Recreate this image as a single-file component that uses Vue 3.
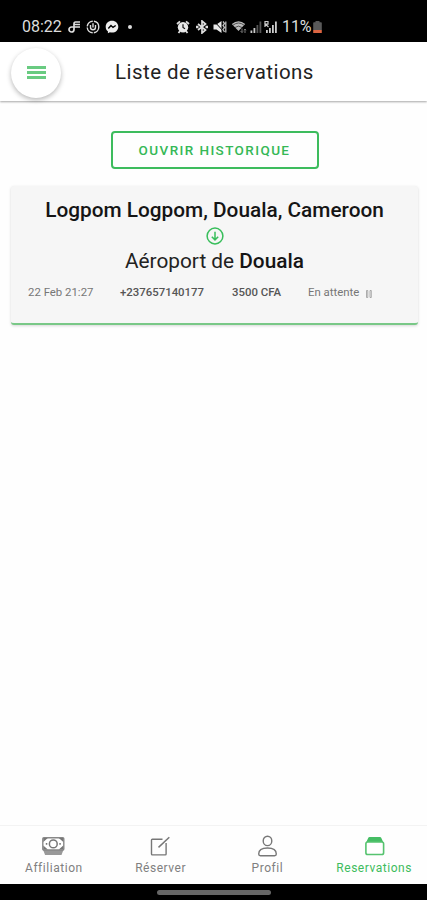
<script setup>
import { ref } from 'vue'

const active = ref('reservations')

const tabs = [
  { id: 'affiliation', label: 'Affiliation' },
  { id: 'reserver', label: 'Réserver' },
  { id: 'profil', label: 'Profil' },
  { id: 'reservations', label: 'Reservations' }
]
</script>

<template>
  <div class="screen">
    <div class="status-bar">
      <span class="time">08:22</span>
      <svg class="i-note" width="14" height="14" viewBox="0 0 14 14" fill="none" stroke="#ddd" stroke-width="1.7">
        <path d="M13 2H8.5Q7 2 7 4v5.5a2.5 2.5 0 1 1-2.5-2.5H13M7 4.5h6" />
      </svg>
      <svg class="i-round" width="14" height="14" viewBox="0 0 14 14" fill="none" stroke="#ddd" stroke-width="1.4">
        <circle cx="7" cy="7" r="5.8" stroke-dasharray="8 1.2" />
        <path d="M4.5 5v2.2a2.5 2.5 0 0 0 5 0V5M7 3.3v4.2" />
      </svg>
      <svg class="i-msg" width="14" height="14" viewBox="0 0 14 14">
        <path d="M7 .7C3.3.7.7 3.3.7 6.7c0 2 .8 3.5 2.2 4.6v2l2-1c.7.2 1.4.3 2.1.3 3.7 0 6.3-2.6 6.3-5.9S10.7.7 7 .7z" fill="#eee" />
        <path d="M3.3 8.5L6 5.6l2 1.8 2.7-1.9" fill="none" stroke="#000" stroke-width="1.4" />
      </svg>
      <span class="dot"></span>
      <svg class="i-alarm" width="14" height="14" viewBox="0 0 14 14" fill="none">
        <path d="M1 4l3-2.7M13 4l-3-2.7M2.5 13l1.500-2M11.500 13L10 11" stroke="#ddd" stroke-width="1.8" />
        <circle cx="7" cy="7.200" r="5.200" fill="#e8e8e8" />
        <path d="M7 4.300v3.200l2 1.300" stroke="#111" stroke-width="1.2" />
      </svg>
      <svg class="i-bt" width="14" height="14" viewBox="0 0 14 14" fill="none" stroke="#ddd" stroke-width="1.7">
        <path d="M3 4l7.500 6L7 13V1l3.500 3L3 10" />
        <path d="M1 7h2.500M10.500 7H13" stroke-width="2.400" />
      </svg>
      <svg class="i-mute" width="14" height="14" viewBox="0 0 14 14">
        <path d="M.5 4.500h3L8.500 1v12l-5-3.500h-3z" fill="#e8e8e8" />
        <path d="M1 1l11 12" stroke="#000" stroke-width="1" />
        <path d="M10 1.500l1.500 2-1.500 2 1.500 2-1.500 2 1.500 2.500M12.800 1.500v11" fill="none" stroke="#bbb" stroke-width="1.3" />
      </svg>
      <svg class="i-wifi" width="16" height="14" viewBox="0 0 16 14" fill="none">
        <path d="M.8 4Q7.500-1.500 14.200 4L7.500 11z" fill="#bbb" />
        <path d="M2 5.200q5.500-4.400 11 0M4 7.500q3.500-2.800 7 0" stroke="#333" stroke-width=".8" />
        <path d="M11 8.500v4m-1.500-1.500l1.500 1.500 1-1M14 13V9m-1.200 1.200L14 9l1.200 1.200" stroke="#777" />
      </svg>
      <svg class="i-sig" width="12" height="14" viewBox="0 0 12 14">
        <path d="M.5 10.500h1.800V13H.5zM3.500 8h1.800v5H3.500z" fill="#ccc" />
        <path d="M6.500 5h1.800v8H6.500zM9.500 1.500h1.800V13H9.500z" fill="#555" />
      </svg>
      <svg class="i-sig2" width="13" height="14" viewBox="0 0 13 14">
        <path d="M2 10h1.800v3H2zM5 8h1.800v5H5zM8 5h1.800v8H8zM11 1.500h1.800V13H11z" fill="#ccc" />
        <path d="M1 7V1.500h3v2.700H1.500L4.500 7" fill="none" stroke="#ccc" stroke-width="1.2" />
      </svg>
      <span class="percent">11%</span>
      <svg class="i-bat" width="9" height="14" viewBox="0 0 9 14">
        <path d="M2.500 1h4v1.200H8q.8 0 .8.800v7H.2V3q0-.8.800-.8h1.500z" fill="#595959" />
        <path d="M.2 10h8.600v3H.2z" fill="#dc6542" />
      </svg>
    </div>

    <header class="toolbar">
      <button type="button" class="menu-btn">
        <span></span><span></span><span></span>
      </button>
      <h1>Liste de réservations</h1>
    </header>

    <main class="content">
      <button type="button" class="history-btn">OUVRIR HISTORIQUE</button>

      <div class="card">
        <div class="place from">Logpom Logpom, Douala, Cameroon</div>
        <svg class="arrow" width="18" height="18" viewBox="0 0 18 18" fill="none" stroke="#38be5b" stroke-width="1.5">
          <circle cx="9" cy="9" r="7.9" />
          <path d="M9 4.800v8M5.800 9.700L9 12.900l3.200-3.200" />
        </svg>
        <div class="place to">Aéroport de <b>Douala</b></div>
        <div class="infos">
          <span class="date">22 Feb 21:27</span>
          <span class="phone">+237657140177</span>
          <span class="price">3500 CFA</span>
          <span class="state">En attente</span>
          <svg class="pause" width="6" height="8" viewBox="0 0 6 8" fill="none" stroke="#999" stroke-width=".8">
            <path d="M.5.500h1.300v7H.5zM4 .5h1.300v7H4z" />
          </svg>
        </div>
      </div>
    </main>

    <nav class="tabs">
      <button
        v-for="tab in tabs"
        :key="tab.id"
        type="button"
        :class="[tab.id, { active: active === tab.id }]"
        @click="active = tab.id"
      >
        <svg v-if="tab.id === 'affiliation'" width="24" height="24" viewBox="0 0 24 24">
          <path d="M1.800 15h21l-2.300 5.900H4.100z" fill="#999" />
          <rect x="1.800" y="3.700" width="21" height="12.300" rx="1" fill="#fff" stroke="#888" stroke-width="1.400" />
          <path d="M2.300 4h4.500l-4.500 4zM22.300 4h-4.500l4.500 4zM2.300 15.500h4.500l-4.500-4zM22.300 15.500h-4.500l4.500-4z" fill="#777" />
          <circle cx="12.300" cy="9.900" r="3.900" fill="none" stroke="#777" stroke-width="1.500" />
          <path d="M4.800 9.900h1.500M18.300 9.900h1.500" stroke="#777" stroke-width="1.700" />
        </svg>
        <svg v-else-if="tab.id === 'reserver'" width="24" height="24" viewBox="0 0 24 24" fill="none" stroke="#777" stroke-width="1.4">
          <path d="M14.500 5.300H4.300q-.8 0-.8.800v14q0 .8.800.8h13q.8 0 .8-.8V9" />
          <path d="M10.500 13.400L21.300 3.200" stroke-width="1.5" />
        </svg>
        <svg v-else-if="tab.id === 'profil'" width="24" height="24" viewBox="0 0 24 24" fill="none" stroke="#777" stroke-width="1.4">
          <ellipse cx="12.500" cy="6.900" rx="4.300" ry="4.700" />
          <path d="M3.700 20c0-4 3.600-6 8.800-6s8.800 2 8.800 6q0 1.700-1.700 1.700H5.400q-1.700 0-1.700-1.700z" />
        </svg>
        <svg v-else width="24" height="24" viewBox="0 0 24 24">
          <path d="M7.500 3h10.500q.8 0 1.200.8l2.300 5h-17.500l2.300-5q.4-.8 1.200-.8z" fill="#45bd64" />
          <rect x="3.900" y="8" width="17.700" height="12.500" rx="1.800" fill="#fff" stroke="#56c36f" stroke-width="1.6" />
        </svg>
        <span>{{ tab.label }}</span>
      </button>
    </nav>
    <div class="system-bar"><span></span></div>
  </div>
</template>

<style>
body {
  margin: 0;
}
</style>

<style scoped>
.screen {
  display: flex;
  flex-direction: column;
  width: 427px;
  height: 900px;
  overflow: hidden;
  background: #fefefe;
  font-family: Roboto, "Liberation Sans", sans-serif;
  color: #222;
}

button {
  padding: 0;
  border: none;
  background: transparent;
  font-family: inherit;
}

svg {
  display: block;
  flex: none;
}

.status-bar {
  display: flex;
  flex: none;
  align-items: center;
  box-sizing: border-box;
  height: 42px;
  padding: 11px 0 0 22px;
  background: #000;
  color: #ddd;
  font-size: 16px;
  line-height: 20px;
  white-space: nowrap;
}

.time {
  width: 45px;
}

.i-round,
.i-msg,
.i-bt {
  margin-left: 5px;
}

.dot {
  width: 4px;
  height: 4px;
  margin: 0 44px 0 9px;
  border-radius: 50%;
  background: #ddd;
}

.i-mute,
.i-wifi {
  margin-left: 4px;
}

.i-sig {
  margin-left: 3px;
}

.i-sig2 {
  margin-left: 2px;
}

.percent {
  width: 31px;
  margin-left: 5px;
  letter-spacing: -0.1px;
}

.toolbar {
  display: flex;
  flex: none;
  align-items: center;
  box-sizing: border-box;
  height: 59px;
  padding-left: 11px;
  background: #fff;
  box-shadow: 0 1px 2px rgba(0, 0, 0, 0.35);
}

.menu-btn {
  display: flex;
  flex-direction: column;
  align-items: center;
  justify-content: center;
  gap: 2px;
  width: 50px;
  height: 50px;
  margin-top: 2px;
  border-radius: 50%;
  background: #fff;
  box-shadow: 0 2px 5px rgba(0, 0, 0, 0.28);
}

.menu-btn span {
  width: 19px;
  height: 3px;
  background: #69cb81;
}

.toolbar h1 {
  margin: 0 0 0 54px;
  font-size: 20.5px;
  font-weight: 400;
  line-height: 28px;
  letter-spacing: 0.46px;
  white-space: nowrap;
}

.content {
  display: flex;
  flex: 1;
  flex-direction: column;
  align-items: center;
  padding: 30px 9px 0 11px;
}

.history-btn {
  box-sizing: border-box;
  width: 208px;
  height: 38px;
  border: 2px solid #3dbc5d;
  border-radius: 4px;
  color: #35b856;
  font-size: 13.5px;
  font-weight: 500;
  letter-spacing: 1.4px;
}

.card {
  display: flex;
  flex-direction: column;
  align-items: center;
  box-sizing: border-box;
  width: 407px;
  height: 139px;
  margin-top: 17px;
  padding-top: 12px;
  border-bottom: 2px solid #79c887;
  border-radius: 3px;
  background: #f6f6f6;
  box-shadow: 0 1px 3px rgba(0, 0, 0, 0.16);
}

.place {
  font-size: 20.8px;
  line-height: 24px;
  white-space: nowrap;
}

.from {
  color: #151515;
  font-weight: 500;
}

.arrow {
  margin: 5px 0 4px;
}

.to b {
  color: #151515;
  font-weight: 500;
}

.infos {
  display: flex;
  align-items: center;
  align-self: stretch;
  margin-top: 11px;
  padding-left: 17px;
  color: #777;
  font-size: 11.4px;
  line-height: 16px;
  white-space: nowrap;
}

.date {
  width: 92px;
}

.phone {
  width: 112px;
  color: #555;
  font-weight: 500;
}

.price {
  width: 76px;
  color: #555;
  font-weight: 500;
}

.state {
  width: 58px;
}

.pause {
  margin-top: 3px;
}

.tabs {
  display: flex;
  flex: none;
  box-sizing: border-box;
  height: 59px;
  border-top: 1px solid #f3f3f3;
}

.tabs button {
  display: flex;
  flex: 1 1 0;
  flex-direction: column;
  align-items: center;
  padding-top: 8px;
  color: #808080;
  font-size: 12px;
  line-height: 16px;
  letter-spacing: 0.53px;
}

.tabs span {
  margin: 2px 0 0 1px;
}

.tabs button.active {
  color: #3dbc5d;
}

.system-bar {
  display: flex;
  flex: none;
  justify-content: center;
  height: 16px;
  background: #000;
}

.system-bar span {
  width: 114px;
  height: 5px;
  margin-top: 6px;
  border-radius: 3px;
  background: #666;
}
</style>
